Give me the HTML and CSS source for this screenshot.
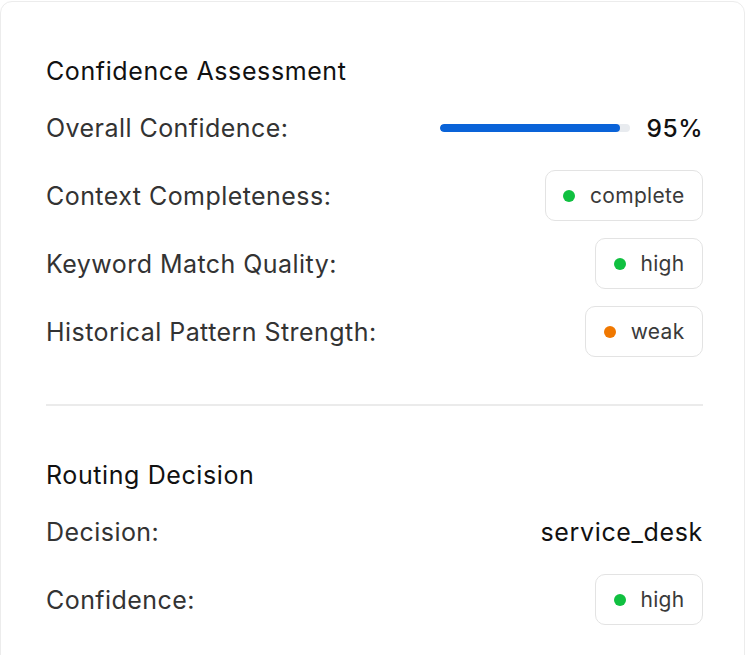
FILE: index.html
```html
<!DOCTYPE html>
<html>
<head>
<meta charset="utf-8">
<link rel="stylesheet" href="styles.css">
</head>
<body>
<div class="card">
  <section class="section">
    <h2 class="title">Confidence Assessment</h2>
    <div class="rows">
      <div class="row">
        <span class="label">Overall Confidence:</span>
        <div class="meter">
          <div class="track"><div class="fill" style="width:95%"></div></div>
          <span class="pct">95%</span>
        </div>
      </div>
      <div class="row">
        <span class="label">Context Completeness:</span>
        <span class="badge"><span class="dot green"></span>complete</span>
      </div>
      <div class="row">
        <span class="label">Keyword Match Quality:</span>
        <span class="badge"><span class="dot green"></span>high</span>
      </div>
      <div class="row">
        <span class="label">Historical Pattern Strength:</span>
        <span class="badge"><span class="dot orange"></span>weak</span>
      </div>
    </div>
  </section>
  <hr class="divider">
  <section class="section">
    <h2 class="title">Routing Decision</h2>
    <div class="rows">
      <div class="row">
        <span class="label">Decision:</span>
        <span class="value">service_desk</span>
      </div>
      <div class="row">
        <span class="label">Confidence:</span>
        <span class="badge"><span class="dot green"></span>high</span>
      </div>
    </div>
  </section>
</div>
</body>
</html>
```
FILE: styles.css
```css
html, body {
  margin: 0;
  padding: 0;
  background: #ffffff;
}
body {
  font-family: Inter, "Noto Sans", sans-serif;
  color: #333333;
}
.card {
  margin-top: 1px;
  border: 1px solid #ececec;
  border-radius: 12px;
  padding: 0 41px 60px 45px;
  min-height: 700px;
  background: #fff;
}
.section {
  padding-top: 54px;
  padding-bottom: 47px;
}
.title {
  margin: 0 0 16px 0;
  font-size: 25px;
  line-height: 30px;
  font-weight: 400;
  letter-spacing: 0.6px;
  color: #111111;
}
.rows {
  display: flex;
  flex-direction: column;
  gap: 17px;
}
.row {
  display: flex;
  align-items: center;
  justify-content: space-between;
  min-height: 51px;
}
.label {
  font-size: 25px;
  letter-spacing: 0.45px;
  color: #333333;
}
.meter {
  display: flex;
  align-items: center;
  gap: 17px;
}
.track {
  width: 190px;
  height: 8px;
  border-radius: 4px;
  background: #e8ebef;
  overflow: hidden;
}
.fill {
  height: 100%;
  border-radius: 4px;
  background: #0a63d8;
}
.pct {
  font-size: 24.5px;
  font-weight: 500;
  letter-spacing: 0.5px;
  color: #111111;
}
.value {
  font-size: 25px;
  font-weight: 400;
  letter-spacing: 0.65px;
  color: #111111;
}
.badge {
  box-sizing: border-box;
  height: 51px;
  display: inline-flex;
  align-items: center;
  gap: 15px;
  padding: 0 17.5px;
  border: 1.5px solid #e3e3e3;
  border-radius: 10px;
  font-size: 21px;
  letter-spacing: 0.3px;
  color: #3a3a3a;
}
.dot {
  width: 12px;
  height: 12px;
  border-radius: 50%;
  flex: none;
}
.dot.green { background: #10c040; }
.dot.orange { background: #f07800; }
.divider {
  border: none;
  height: 2px;
  background: #ebebeb;
  margin: 0;
}
```
